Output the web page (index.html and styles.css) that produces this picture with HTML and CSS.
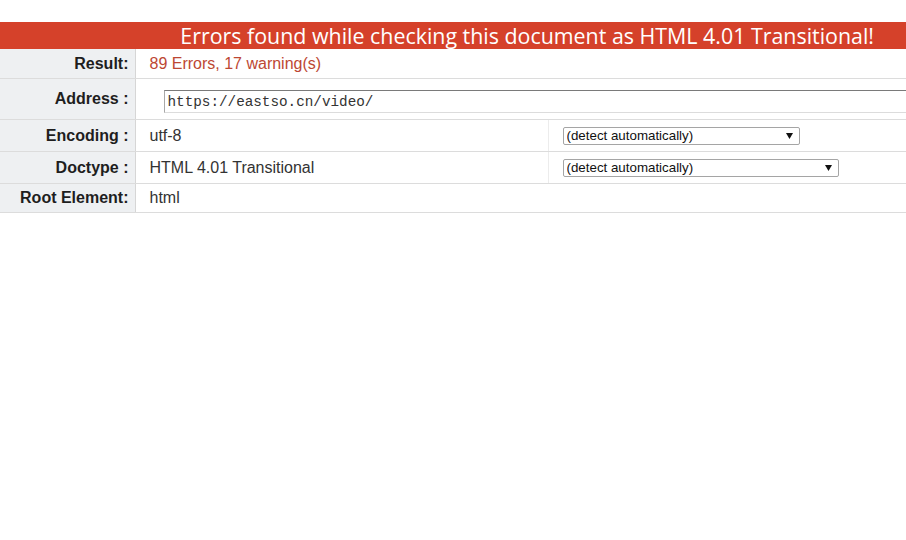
FILE: index.html
```html
<!DOCTYPE html>
<html lang="en">
<head>
<meta charset="utf-8">
<title>Validation result</title>
<link rel="stylesheet" href="styles.css">
</head>
<body>
<div class="page">
  <h2 class="banner">Errors found while checking this document as HTML 4.01 Transitional!</h2>
  <table class="results">
    <colgroup>
      <col class="c-label">
      <col class="c-value">
      <col class="c-opt">
    </colgroup>
    <tr class="row row-result">
      <th>Result:</th>
      <td colspan="2" class="invalid">89 Errors, 17 warning(s)</td>
    </tr>
    <tr class="row row-address">
      <th>Address :</th>
      <td colspan="2" class="addr-cell"><input class="addr" type="text" value="https://eastso.cn/video/"></td>
    </tr>
    <tr class="row row-mid">
      <th>Encoding :</th>
      <td>utf-8</td>
      <td class="opt"><select class="sel sel-enc"><option>(detect automatically)</option></select></td>
    </tr>
    <tr class="row row-mid">
      <th>Doctype :</th>
      <td>HTML 4.01 Transitional</td>
      <td class="opt"><select class="sel sel-doc"><option>(detect automatically)</option></select></td>
    </tr>
    <tr class="row row-root">
      <th>Root Element:</th>
      <td colspan="2">html</td>
    </tr>
  </table>
</div>
</body>
</html>
```

FILE: styles.css
```css
html, body {
  margin: 0;
  padding: 0;
  background: #ffffff;
  overflow: hidden;
}

.page {
  padding-top: 22px;
  font-family: "Liberation Sans", Arial, sans-serif;
}

.banner {
  margin: 0;
  height: 27px;
  line-height: 27px;
  background: #d5412a;
  color: #ffffff;
  font-family: "Open Sans", "Noto Sans", sans-serif;
  font-weight: 400;
  font-size: 21.4px;
  text-align: right;
  padding-right: 32px;
  white-space: nowrap;
}

.results {
  width: 100%;
  table-layout: fixed;
  border-collapse: collapse;
  font-size: 16px;
}

.c-label { width: 135px; }
.c-value { width: 413px; }

.results th,
.results td {
  padding: 0;
  border-bottom: 1px solid #dcdcdc;
  vertical-align: middle;
  white-space: nowrap;
  line-height: 18px;
}

.results th {
  background: #eef0f2;
  color: #1e1e1e;
  font-weight: 700;
  text-align: right;
  padding-right: 6px;
  border-right: 1px solid #d6d6d6;
}

.results td {
  color: #333333;
  padding-left: 14px;
}

.row-result th, .row-result td { height: 29px; }
.row-root th, .row-root td { height: 28px; }
.row-address th, .row-address td { height: 40px; }
.row-mid th, .row-mid td { height: 31px; }

.results td.invalid {
  color: #bd4733;
}

.results td.opt {
  border-left: 1px solid #ececec;
}

.results td.addr-cell {
  padding-left: 28px;
  padding-top: 11px;
  height: 29px;
  vertical-align: top;
  overflow: visible;
}

.addr {
  display: block;
  box-sizing: border-box;
  width: 780px;
  height: 23px;
  margin: 0;
  padding: 1px 0 0 3px;
  border-top: 1px solid #7a7a7a;
  border-left: 1px solid #a8a8a8;
  border-right: 1px solid #dcdcdc;
  border-bottom: 1px solid #dcdcdc;
  font-family: "Liberation Mono", "Courier New", monospace;
  font-size: 14.3px;
  color: #333333;
  background: #ffffff;
  outline: none;
}

.sel {
  display: block;
  box-sizing: border-box;
  height: 18px;
  margin: 0;
  padding: 0 0 0 3px;
  border: 1px solid #a5a5a5;
  border-radius: 2px;
  background-color: #ffffff;
  background-image: url("data:image/svg+xml;utf8,<svg xmlns='http://www.w3.org/2000/svg' width='7' height='6'><path d='M0 0H7L3.5 6Z' fill='%23111'/></svg>");
  background-repeat: no-repeat;
  background-position: right 6px center;
  -webkit-appearance: none;
  appearance: none;
  font-family: "Liberation Sans", Arial, sans-serif;
  font-size: 13.33px;
  line-height: 16px;
  color: #111111;
}

.sel-enc { width: 237px; }
.sel-doc { width: 276px; }
```
